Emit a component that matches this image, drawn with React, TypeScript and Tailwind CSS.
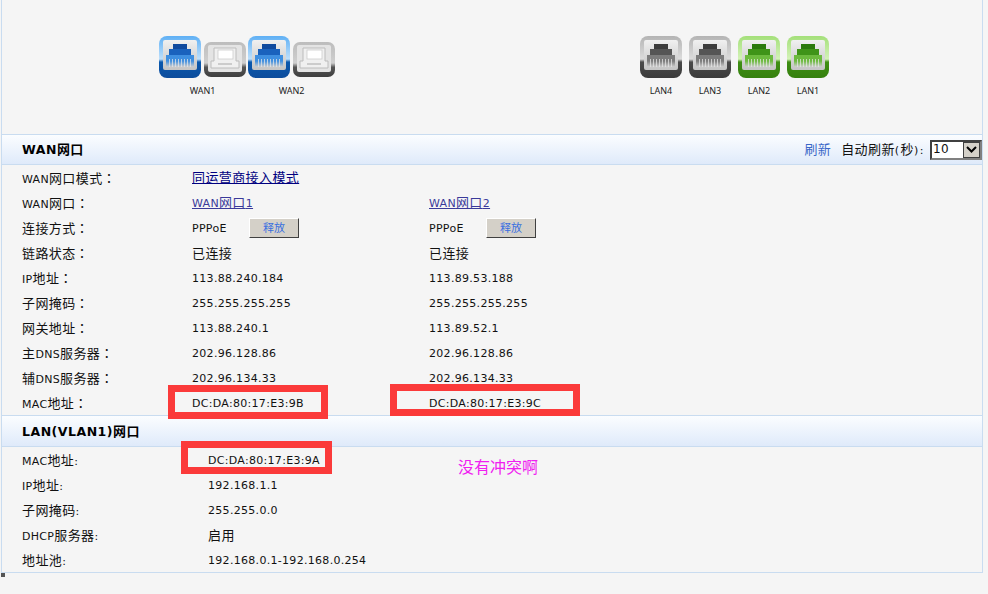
import React, { useId } from "react";

const CJK_RUN = /([\u3000-\uffff]+)/;

function Mixed({ text, small }: { text: string; small?: boolean }) {
  const parts = text.split(CJK_RUN).filter(Boolean);
  return (
    <>
      {parts.map((p, i) => {
        if (!/[\u3000-\uffff]/.test(p)) return <span key={i}>{p}</span>;
        const colon = p.endsWith("：");
        const body = colon ? p.slice(0, -1) : p;
        return (
          <span
            key={i}
            className={`font-['Noto_Sans_CJK_SC',sans-serif] ${small ? "text-[11px] tracking-normal" : "text-[13px] tracking-[0.4px]"}`}
          >
            {body}
            {colon && <span className="font-['Noto_Sans_CJK_TC',sans-serif]">：</span>}
          </span>
        );
      })}
    </>
  );
}

type Pal = { top: string; mid: string; dark: string; bot: string; plugTop: string; plugMid: string; plugBody: string };
const BLUE: Pal = { top: "#5fb0f5", mid: "#bfe0fb", dark: "#0a58ad", bot: "#0c4c9c", plugTop: "#0f4a9e", plugMid: "#1a62bd", plugBody: "#3f8fe0" };
const GREEN: Pal = { top: "#a4e07a", mid: "#d4f2b8", dark: "#3f8f14", bot: "#35800e", plugTop: "#2b7a0c", plugMid: "#3f9418", plugBody: "#6cba3e" };
const GRAY: Pal = { top: "#b4b4b4", mid: "#dcdcdc", dark: "#4a4a4a", bot: "#3a3a3a", plugTop: "#3c3c3c", plugMid: "#555555", plugBody: "#7c7c7c" };

function ActivePort({ p }: { p: Pal }) {
  const id = useId();
  return (
    <svg width="42" height="42" viewBox="0 0 42 42" className="block">
      <defs>
        <linearGradient id={id + "o"} x1="0" y1="0" x2="0" y2="1">
          <stop offset="0" stopColor={p.top} />
          <stop offset="0.55" stopColor={p.mid} />
          <stop offset="0.62" stopColor={p.dark} />
          <stop offset="1" stopColor={p.bot} />
        </linearGradient>
        <linearGradient id={id + "i"} x1="0" y1="0" x2="0" y2="1">
          <stop offset="0" stopColor="#f0f0f0" />
          <stop offset="1" stopColor="#c4c4c4" />
        </linearGradient>
        <linearGradient id={id + "b"} x1="0" y1="0" x2="0" y2="1">
          <stop offset="0" stopColor={p.plugBody} />
          <stop offset="0.5" stopColor={p.plugBody} />
          <stop offset="1" stopColor="#cfcfcf" />
        </linearGradient>
      </defs>
      <rect x="0" y="0" width="42" height="42" rx="8" fill={`url(#${id}o)`} />
      <rect x="4" y="4" width="34" height="30" rx="2" fill={`url(#${id}i)`} />
      <rect x="14" y="8" width="14" height="5" fill={p.plugTop} />
      <rect x="10" y="13" width="22" height="6" fill={p.plugMid} />
      <rect x="7" y="19" width="28" height="12" fill={`url(#${id}b)`} />
      {[10, 13, 16, 19, 22, 25, 28, 31].map((x) => (
        <rect key={x} x={x} y="23" width="1" height="8" fill="#e6e6e6" opacity="0.75" />
      ))}
    </svg>
  );
}

function IdlePort() {
  const id = useId();
  return (
    <svg width="42" height="35" viewBox="0 0 42 35" className="block">
      <defs>
        <linearGradient id={id + "o"} x1="0" y1="0" x2="0" y2="1">
          <stop offset="0" stopColor="#bdbdbd" />
          <stop offset="0.6" stopColor="#cfcfcf" />
          <stop offset="0.72" stopColor="#555555" />
          <stop offset="1" stopColor="#3e3e3e" />
        </linearGradient>
      </defs>
      <rect x="0" y="0" width="42" height="35" rx="7" fill={`url(#${id}o)`} />
      <rect x="4" y="3" width="34" height="27" rx="2" fill="#e4e4e4" />
      <path d="M10 6h22v13h3v7H7v-7h3z" fill="#f0f0f0" stroke="#bcbcbc" strokeWidth="1" />
      <rect x="14" y="8" width="15" height="9" fill="#ffffff" stroke="#cccccc" strokeWidth="0.8" />
      <rect x="14" y="21" width="14" height="2" fill="#cccccc" />
    </svg>
  );
}

function Label({ children }: { children: string }) {
  return <div className="mt-[6px] h-[14px] font-['Noto_Sans',sans-serif] text-[9px] leading-[14px] tracking-normal text-[#222]">{children}</div>;
}

function Pair({ label }: { label: string }) {
  return (
    <div className="flex w-[87px] flex-col items-center">
      <div className="flex h-[42px] items-end gap-[3px]">
        <ActivePort p={BLUE} />
        <div className="mb-[1px]"><IdlePort /></div>
      </div>
      <Label>{label}</Label>
    </div>
  );
}

function Lan({ label, p }: { label: string; p: Pal }) {
  return (
    <div className="flex w-[42px] flex-col items-center">
      <ActivePort p={p} />
      <Label>{label}</Label>
    </div>
  );
}

function Val({ children }: { children: string }) {
  return <span className="pt-[4px]">{children}</span>;
}

function Row({ label, a, b, wide }: { label: string; a?: React.ReactNode; b?: React.ReactNode; wide?: boolean }) {
  return (
    <div className="flex h-[25px] items-center pl-[20px] text-[#111]">
      <div className={`pt-[1px] ${wide ? "w-[186px]" : "w-[170px]"}`}><Mixed text={label} /></div>
      <div className="flex w-[237px] items-center">{a}</div>
      <div className="flex items-center">{b}</div>
    </div>
  );
}

function Pppoe() {
  return (
    <>
      <span className="w-[57px] pt-[4px]">PPPoE</span>
      <button className="flex h-[20px] w-[50px] items-center justify-center border border-t-white border-l-white border-r-[#404040] border-b-[#404040] bg-[#d4d0c8] text-[#3a6fe0]">
        <Mixed text="释放" small />
      </button>
    </>
  );
}

function Header({ title, children, className }: { title: string; children?: React.ReactNode; className: string }) {
  return (
    <div className={`flex items-center justify-between border-y border-[#c9dcf0] bg-gradient-to-b from-[#fbfdff] to-[#dfeafa] pl-[20px] ${className}`}>
      <div className="text-[12.5px] font-bold tracking-[0.5px] text-black">
        <Mixed text={title} />
      </div>
      {children}
    </div>
  );
}

function Box({ className }: { className: string }) {
  return <div className={`absolute border-[7px] border-[#fb3a3a] ${className}`} />;
}

export default function App() {
  return (
    <div className="relative h-[594px] w-[988px] overflow-hidden bg-[#f5f5f5] font-['DejaVu_Sans',sans-serif] text-[11px] tracking-[0.3px]">
      <div className="ml-[1px] h-[573px] w-[982px] border-x border-b border-[#c9dcf0]">
        <div className="flex h-[134px] justify-between pt-[36px] pl-[157px] pr-[153px]">
          <div className="flex gap-[2px]">
            <Pair label="WAN1" />
            <Pair label="WAN2" />
          </div>
          <div className="flex gap-[7px]">
            <Lan label="LAN4" p={GRAY} />
            <Lan label="LAN3" p={GRAY} />
            <Lan label="LAN2" p={GREEN} />
            <Lan label="LAN1" p={GREEN} />
          </div>
        </div>

        <Header title="WAN网口" className="h-[31px]">
          <div className="flex items-center">
            <a className="mr-[10px] text-[#3a67c8]"><Mixed text="刷新" /></a>
            <span className="mr-[5px] tracking-[1.5px] text-[#111]"><Mixed text="自动刷新(秒):" /></span>
            <div className="flex h-[20px] w-[52px] items-stretch border-2 border-t-[#404040] border-l-[#404040] border-r-[#808080] border-b-[#808080] bg-white">
              <span className="flex-1 pl-[1px] text-[12px] leading-[15px] text-[#111]">10</span>
              <span className="flex w-[17px] items-center justify-center border border-[#404040] bg-[#d4d0c8]">
                <svg width="11" height="7" viewBox="0 0 11 7"><path d="M1 1l4.5 4.5L10 1" fill="none" stroke="#000" strokeWidth="2" /></svg>
              </span>
            </div>
          </div>
        </Header>

        <Row label="WAN网口模式：" a={<a className="text-[#000080] underline"><Mixed text="同运营商接入模式" /></a>} />
        <Row
          label="WAN网口："
          a={<a className="text-[#3a3a9a] underline"><Mixed text="WAN网口1" /></a>}
          b={<a className="text-[#3a3a9a] underline"><Mixed text="WAN网口2" /></a>}
        />
        <Row label="连接方式：" a={<Pppoe />} b={<Pppoe />} />
        <Row label="链路状态：" a={<Mixed text="已连接" />} b={<Mixed text="已连接" />} />
        <Row label="IP地址：" a={<Val>113.88.240.184</Val>} b={<Val>113.89.53.188</Val>} />
        <Row label="子网掩码：" a={<Val>255.255.255.255</Val>} b={<Val>255.255.255.255</Val>} />
        <Row label="网关地址：" a={<Val>113.88.240.1</Val>} b={<Val>113.89.52.1</Val>} />
        <Row label="主DNS服务器：" a={<Val>202.96.128.86</Val>} b={<Val>202.96.128.86</Val>} />
        <Row label="辅DNS服务器：" a={<Val>202.96.134.33</Val>} b={<Val>202.96.134.33</Val>} />
        <Row label="MAC地址：" a={<Val>DC:DA:80:17:E3:9B</Val>} b={<Val>DC:DA:80:17:E3:9C</Val>} />

        <Header title="LAN(VLAN1)网口" className="h-[32px]" />

        <Row wide label="MAC地址:" a={<Val>DC:DA:80:17:E3:9A</Val>} />
        <Row wide label="IP地址:" a={<Val>192.168.1.1</Val>} />
        <Row wide label="子网掩码:" a={<Val>255.255.0.0</Val>} />
        <Row wide label="DHCP服务器:" a={<Mixed text="启用" />} />
        <Row wide label="地址池:" a={<Val>192.168.0.1-192.168.0.254</Val>} />
      </div>
      <div className="ml-[1px] h-[4px] w-[4px] bg-[#555]" />

      <Box className="left-[168px] top-[385px] h-[34px] w-[160px]" />
      <Box className="left-[390px] top-[384px] h-[32px] w-[190px]" />
      <Box className="left-[181px] top-[441px] h-[33px] w-[151px]" />
      <div className="absolute left-[458px] top-[456px] font-['Noto_Sans_CJK_SC',sans-serif] text-[16px] leading-[20px] tracking-normal text-[#f020f0]">没有冲突啊</div>
    </div>
  );
}
